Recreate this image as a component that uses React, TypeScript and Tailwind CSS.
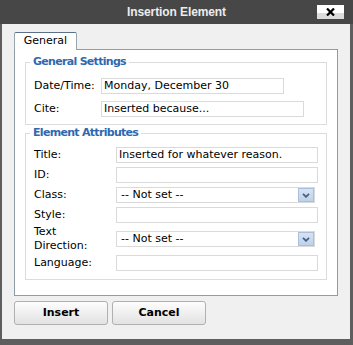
import React from "react";

function Field({ label, w, value = "" }: { label: React.ReactNode; w: string; value?: string }) {
  return (
    <div className="flex items-center">
      <label className="shrink-0">{label}</label>
      <div className={`flex h-[16px] items-center border border-[#dadada] bg-white pl-[2px] ${w}`}>
        {value}
      </div>
    </div>
  );
}

function Select() {
  return (
    <div className="flex h-[16px] w-[199px] items-center justify-between border border-[#dadada] bg-white pl-[4px]">
      <span>-- Not set --</span>
      <span className="flex h-[14px] w-[16px] items-center justify-center border border-[#a9bfdb] bg-[linear-gradient(#d6e3f3,#bed2ec)]">
        <svg width="8" height="5" viewBox="0 0 8 5">
          <path d="M1 0.8 L4 3.8 L7 0.8" fill="none" stroke="#4b5e7e" strokeWidth="1.8" />
        </svg>
      </span>
    </div>
  );
}

export default function App() {
  return (
    <div className="flex h-[345px] w-[353px] flex-col bg-[#5e5e5e] font-['DejaVu_Sans',sans-serif] text-[11px] leading-[12px] text-black">
      {/* title bar */}
      <div className="relative flex h-[24px] shrink-0 items-center justify-center bg-[#474747]">
        <span className="font-['Liberation_Sans',sans-serif] text-[12px] font-bold tracking-[-0.1px] text-[#ececec]">
          Insertion Element
        </span>
        <button className="absolute right-[9px] top-[5px] flex h-[14px] w-[27px] items-center justify-center bg-[linear-gradient(#ffffff_55%,#dcdcdc_55%)]">
          <svg width="9" height="8" viewBox="0 0 9 8">
            <path d="M1 0.5 L8 7.5 M8 0.5 L1 7.5" stroke="#000" strokeWidth="2.2" />
          </svg>
        </button>
      </div>

      <div className="mb-[6px] ml-[2px] mr-[3px] flex-1 bg-[#f0f0f0] px-[12px] pt-[8px]">
        {/* tab */}
        <div className="relative z-10 -mb-[1px] flex h-[18px] w-[63px] items-center justify-center rounded-t-[2px] border-x border-t border-x-[#9aa6ae] border-t-[#5b7189] bg-white pb-[1px]">
          General
        </div>

        {/* panel */}
        <div className="h-[247px] border border-[#8f9ca3] bg-white px-[10px] pt-[5px]">
          <fieldset className="border border-[#dcdcdc] pb-[7px] pl-[8px] pt-[9px]">
            <legend className="-ml-[4px] px-[3px] text-[11px] font-bold leading-[14px] tracking-[-0.7px] text-[#3068b0]">
              General Settings
            </legend>
            <div className="flex flex-col gap-[7px] [&_label]:w-[67px]">
              <Field label="Date/Time:" w="w-[183px]" value="Monday, December 30" />
              <Field label="Cite:" w="w-[203px]" value="Inserted because..." />
            </div>
          </fieldset>

          <fieldset className="mt-[1px] border border-[#dcdcdc] pb-[8px] pl-[8px] pt-[7px]">
            <legend className="-ml-[4px] px-[3px] text-[11px] font-bold leading-[14px] tracking-[-0.7px] text-[#3068b0]">
              Element Attributes
            </legend>
            <div className="flex flex-col gap-[4px] [&_label]:w-[82px]">
              <Field label="Title:" w="w-[202px]" value="Inserted for whatever reason." />
              <Field label="ID:" w="w-[202px]" />
              <div className="flex items-center">
                <label className="shrink-0">Class:</label>
                <Select />
              </div>
              <Field label="Style:" w="w-[202px]" />
              <div className="flex h-[24px] items-center">
                <label className="shrink-0 leading-[14px]">
                  Text
                  <br />
                  Direction:
                </label>
                <Select />
              </div>
              <Field label="Language:" w="w-[202px]" />
            </div>
          </fieldset>
        </div>

        {/* buttons */}
        <div className="mt-[5px] flex gap-[4px]">
          <button className="h-[24px] w-[94px] rounded-[3px] border border-[#b0b0b0] bg-[linear-gradient(#fdfdfd,#e2e2e2)] text-[11px] font-bold">
            Insert
          </button>
          <button className="h-[24px] w-[94px] rounded-[3px] border border-[#b0b0b0] bg-[linear-gradient(#fdfdfd,#e2e2e2)] text-[11px] font-bold">
            Cancel
          </button>
        </div>
      </div>
    </div>
  );
}
